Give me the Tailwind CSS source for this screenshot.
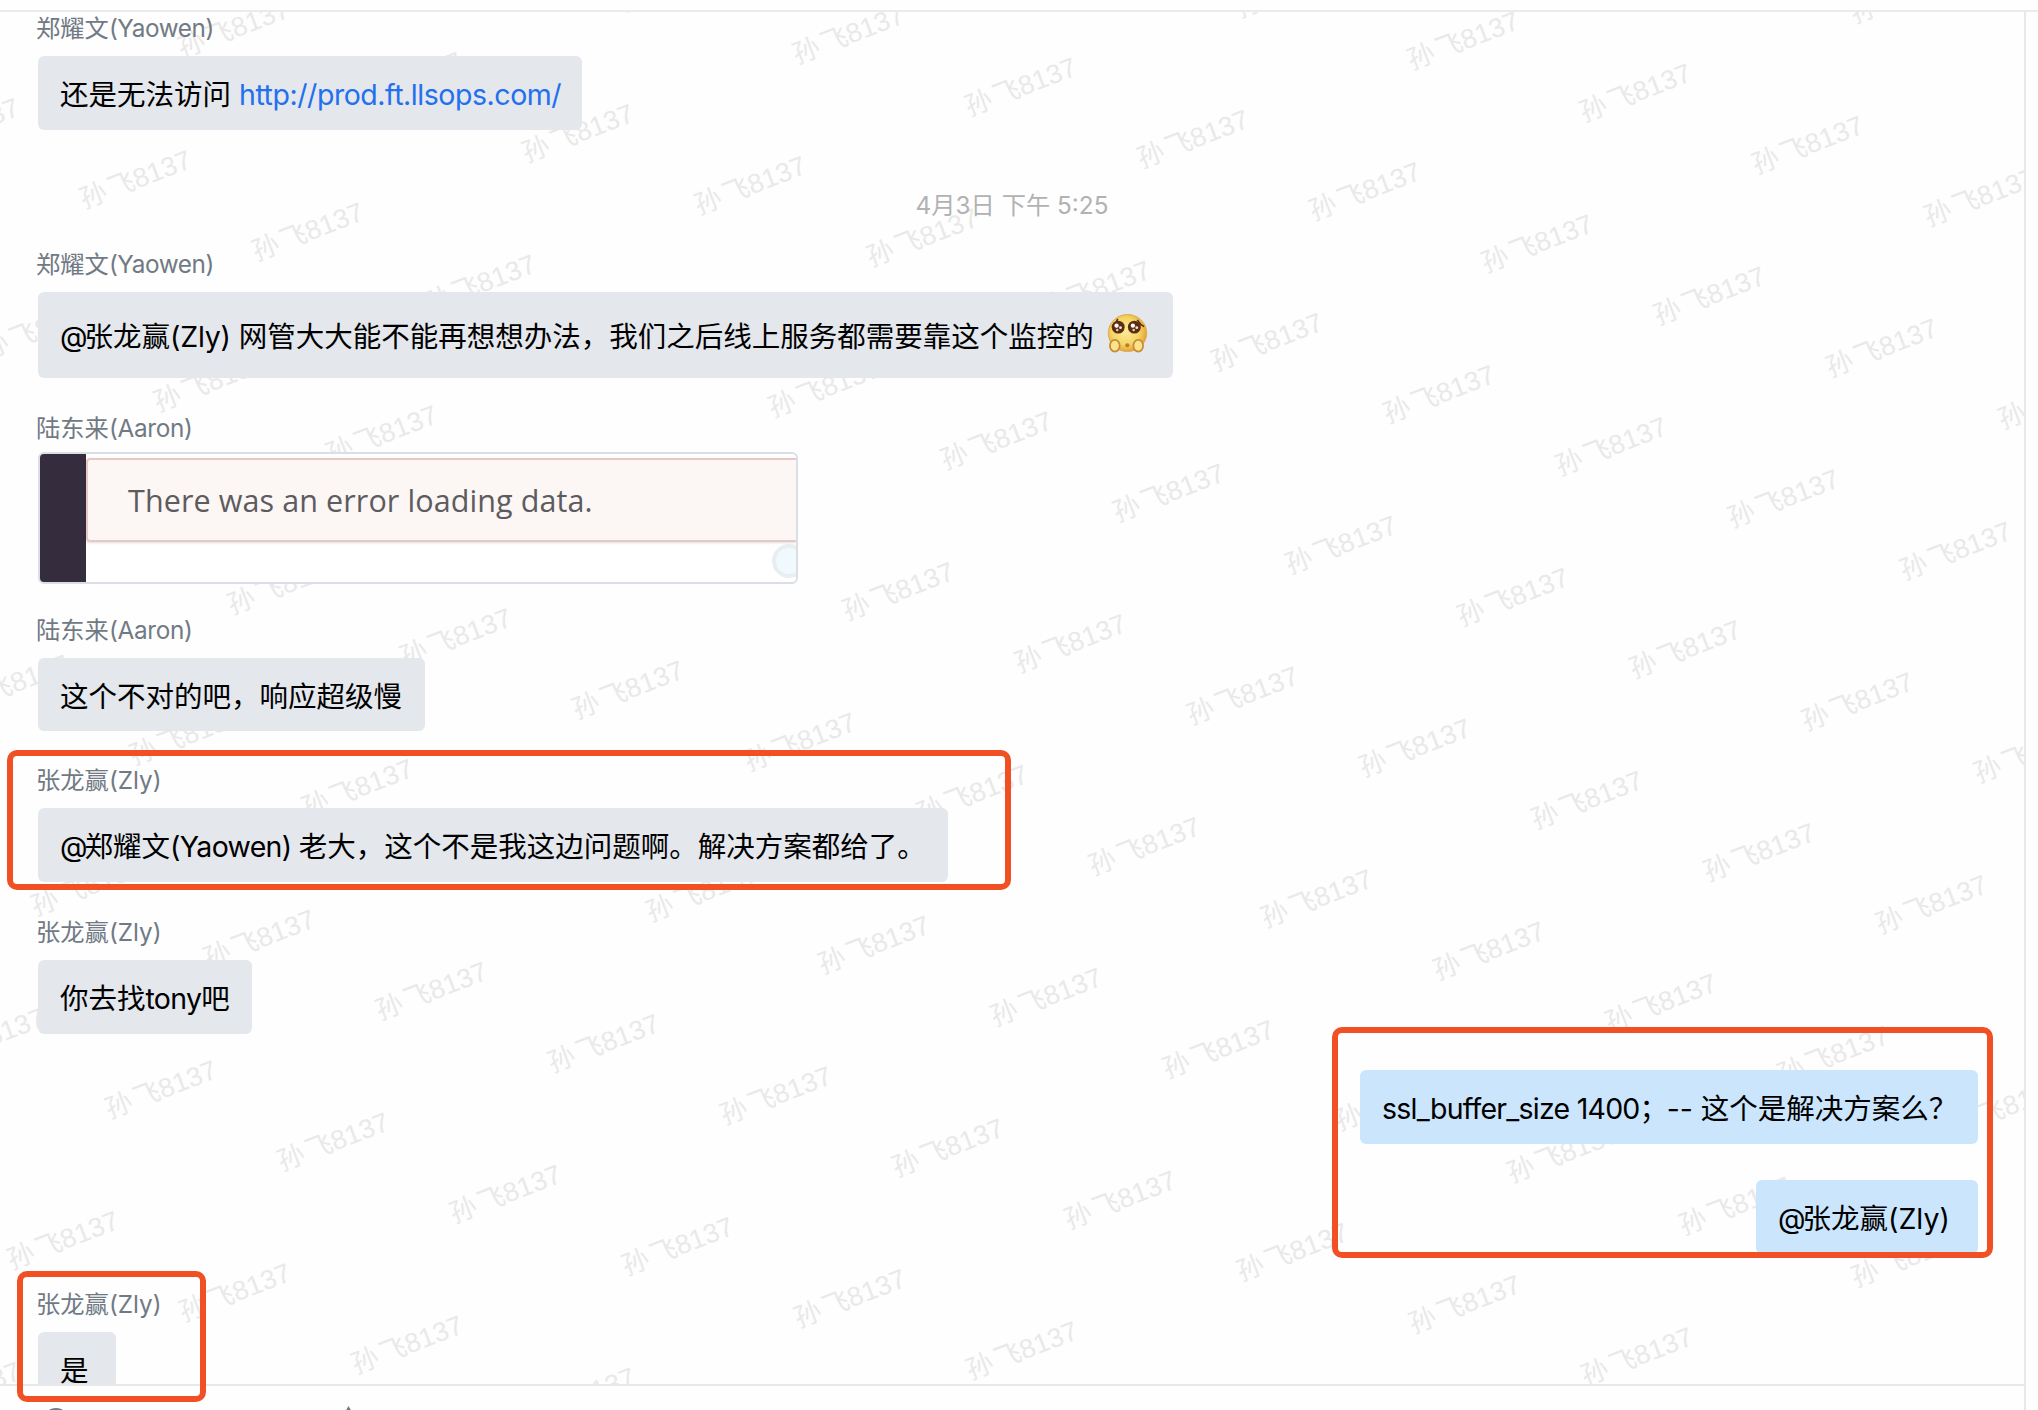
<!DOCTYPE html>
<html lang="zh-CN">
<head>
<meta charset="utf-8">
<title>群聊</title>
<script src="https://cdn.jsdelivr.net/npm/@tailwindcss/browser@4"></script>
</head>
<body class="bg-white">
<div class="relative flex h-[1410px] w-[2038px] flex-col overflow-hidden bg-[#fefefe] pt-[10px] font-['Inter','Noto_Sans_CJK_SC',sans-serif] text-black">
  <div class="h-[2px] shrink-0 bg-[#ebebeb]"></div>
  <div class="flex flex-1">
    <div class="flex w-[2024px] flex-col">
      <!-- message list -->
      <main class="relative h-[1372px] overflow-hidden">
        <svg id="watermark" class="absolute left-0 top-0 h-[1372px] w-[2024px] fill-[#e9e9e9] font-['Liberation_Sans','Noto_Sans_CJK_SC',sans-serif] text-[27px]" viewBox="0 12 2024 1372"></svg>

        <div class="relative flex flex-col items-start pl-[38px] pr-[46px] pt-px text-[28.5px] leading-[42px]">
          <div class="-ml-0.5 mb-[13px] h-[30px] whitespace-nowrap text-[24.3px] leading-[30px] text-[#717a84]">郑耀文<span class="tracking-[-0.4px]">(Yaowen)</span></div>
          <div class="h-[74px] w-[544px] whitespace-nowrap rounded-md bg-[#e4e7ec] pl-[22px] pt-[18px]">还是无法访问 <a class="tracking-[-0.45px] text-[#2270ee]">http://prod.ft.llsops.com/</a></div>

          <div class="mt-[60px] h-[30px] self-center pl-2 whitespace-nowrap text-[24.3px] leading-[30px] text-[#b2b2b2]">4月3日 下午 5:25</div>

          <div class="-ml-0.5 mb-[13px] mt-[29px] h-[30px] whitespace-nowrap text-[24.3px] leading-[30px] text-[#717a84]">郑耀文<span class="tracking-[-0.4px]">(Yaowen)</span></div>
          <div class="flex h-[86px] w-[1135px] whitespace-nowrap rounded-md bg-[#e4e7ec] pl-[22px]">
            <span class="pt-[24px]"><span class="tracking-[-3px]">@</span>张龙赢<span class="tracking-[-0.2px]">(Zly) </span>网管大大能不能再想想办法，我们之后线上服务都需要靠这个监控的</span>
            <svg class="ml-auto mr-[25px] mt-[21px] size-[41px]" viewBox="0 0 42 42">
              <defs>
                <radialGradient id="face" cx=".45" cy=".45" r=".6"><stop offset="0" stop-color="#fdec9c"/><stop offset=".6" stop-color="#f4d565"/><stop offset="1" stop-color="#dc9a30"/></radialGradient>
              </defs>
              <ellipse cx="21" cy="20.5" rx="19.700" ry="19" fill="url(#face)" stroke="#dea23c" stroke-width=".8"/>
              <path d="M5 14c2-1 4-3 6-8M38 14c-2-1-5-4-7-7" stroke="#54280e" stroke-width="1.6" fill="none"/>
              <circle cx="11.500" cy="14.500" r="6.600" fill="#5c2c12"/><circle cx="28" cy="14.500" r="6.600" fill="#5c2c12"/>
              <circle cx="9.800" cy="13" r="2.200" fill="#fff"/><circle cx="13.800" cy="15" r="1.500" fill="#f2dfd0"/><circle cx="10.500" cy="17.500" r="1.300" fill="#e8c9b4"/>
              <circle cx="26.500" cy="13" r="2.200" fill="#fff"/><circle cx="30.500" cy="15" r="1.500" fill="#f2dfd0"/><circle cx="27.300" cy="17.500" r="1.300" fill="#e8c9b4"/>
              <ellipse cx="20.800" cy="33" rx="2.200" ry="2" fill="#c37a2d"/>
              <ellipse cx="8" cy="33.500" rx="5" ry="6" fill="#fbe38c" stroke="#c98a35" stroke-width="1.8"/>
              <ellipse cx="32" cy="33.500" rx="5" ry="6" fill="#fbe38c" stroke="#c98a35" stroke-width="1.8"/>
            </svg>
          </div>

          <div class="-ml-0.5 mb-[9px] mt-[35px] h-[30px] whitespace-nowrap text-[24.3px] leading-[30px] text-[#717a84]">陆东来<span class="tracking-[-0.3px]">(Aaron)</span></div>
          <div class="flex h-[132px] w-[760px] overflow-hidden rounded-md border-2 border-[#dbdfe5] bg-white">
            <div class="w-[46px] shrink-0 bg-[#352d3d]"></div>
            <div class="relative flex-1 pt-[4px]">
              <div class="h-[84px] rounded-l border-2 border-r-0 border-[#e8c8c6] bg-[#fcf6f4] pl-[40px] pt-[19px] font-['Open_Sans',sans-serif] text-[30.5px] leading-[42px] tracking-[0.1px] whitespace-nowrap text-[#5c5c60] shadow-sm">There was an error loading data.</div>
              <div class="absolute -right-[10px] top-[90px] size-[34px] rounded-full border-4 border-[#e9eef0] bg-[#f0f9fe]"></div>
            </div>
          </div>

          <div class="-ml-0.5 mb-[13px] mt-[31px] h-[30px] whitespace-nowrap text-[24.3px] leading-[30px] text-[#717a84]">陆东来<span class="tracking-[-0.3px]">(Aaron)</span></div>
          <div class="h-[73px] w-[387px] whitespace-nowrap rounded-md bg-[#e4e7ec] pl-[22px] pt-[18px]">这个不对的吧，响应超级慢</div>

          <div class="-ml-0.5 mb-[13px] mt-[34px] h-[30px] whitespace-nowrap text-[24.3px] leading-[30px] text-[#717a84]">张龙赢<span>(Zly)</span></div>
          <div class="h-[74px] w-[910px] whitespace-nowrap rounded-md bg-[#e4e7ec] pl-[22px] pt-[18px]"><span class="tracking-[-3px]">@</span>郑耀文<span class="tracking-[-0.7px]">(Yaowen) </span>老大，这个不是我这边问题啊。解决方案都给了。</div>

          <div class="-ml-0.5 mb-[13px] mt-[35px] h-[30px] whitespace-nowrap text-[24.3px] leading-[30px] text-[#717a84]">张龙赢<span>(Zly)</span></div>
          <div class="h-[74px] w-[214px] whitespace-nowrap rounded-md bg-[#e4e7ec] pl-[22px] pt-[18px]">你去找<span class="tracking-[-0.7px]">tony</span>吧</div>

          <div class="mt-[36px] h-[74px] w-[618px] self-end whitespace-nowrap rounded-md bg-[#cbe5fc] pl-[22px] pt-[18px]"><span class="tracking-[-0.75px]">ssl_buffer_size 1400</span><span class="tracking-[-1.5px]">；</span><span>-- </span>这个是解决方案么？</div>
          <div class="mt-[36px] h-[74px] w-[222px] self-end whitespace-nowrap rounded-md bg-[#cbe5fc] pl-[22px] pt-[18px]"><span class="tracking-[-3px]">@</span>张龙赢<span>(Zly)</span></div>

          <div class="-ml-0.5 mb-[13px] mt-[35px] h-[30px] whitespace-nowrap text-[24.3px] leading-[30px] text-[#717a84]">张龙赢<span>(Zly)</span></div>
          <div class="h-[74px] w-[78px] whitespace-nowrap rounded-md bg-[#e4e7ec] pl-[22px] pt-[18px]">是</div>
        </div>
      </main>
      <!-- composer toolbar -->
      <div class="h-[26px] overflow-hidden border-t-2 border-[#e8e8e8]">
        <svg class="h-[60px] w-[400px] fill-none stroke-[#717a84] stroke-2" viewBox="0 0 400 60"><circle cx="56" cy="36" r="13"/><path d="M345 28l3.500-6 3.500 6"/></svg>
      </div>
    </div>
    <div class="w-[2px] bg-[#e8e8e8]"></div>
  </div>

  <!-- highlight frames drawn over the conversation -->
  <div class="absolute left-[7px] top-[750px] h-[140px] w-[1004px] rounded-[10px] border-6 border-[#f15024]"></div>
  <div class="absolute left-[1332px] top-[1027px] h-[231px] w-[661px] rounded-[10px] border-6 border-[#f15024]"></div>
  <div class="absolute left-[17px] top-[1271px] h-[131px] w-[189px] rounded-[10px] border-6 border-[#f15024]"></div>
</div>
<script>
  const layer = document.getElementById('watermark');
  let marks = '';
  for (let n = -14; n <= 18; n++) {
    for (let m = -14; m <= 22; m++) {
      const x = 84 + 172.2 * m - 98.2 * n;
      const y = 209 + 52.2 * m + 150.7 * n;
      if (x < -110 || x > 2022 || y < 10 || y > 1430) continue;
      marks += `<text transform="translate(${x.toFixed(1)} ${y.toFixed(1)}) rotate(-21)">孙<tspan dx="3">飞</tspan>8137</text>`;
    }
  }
  layer.innerHTML = marks;
</script>
</body>
</html>
